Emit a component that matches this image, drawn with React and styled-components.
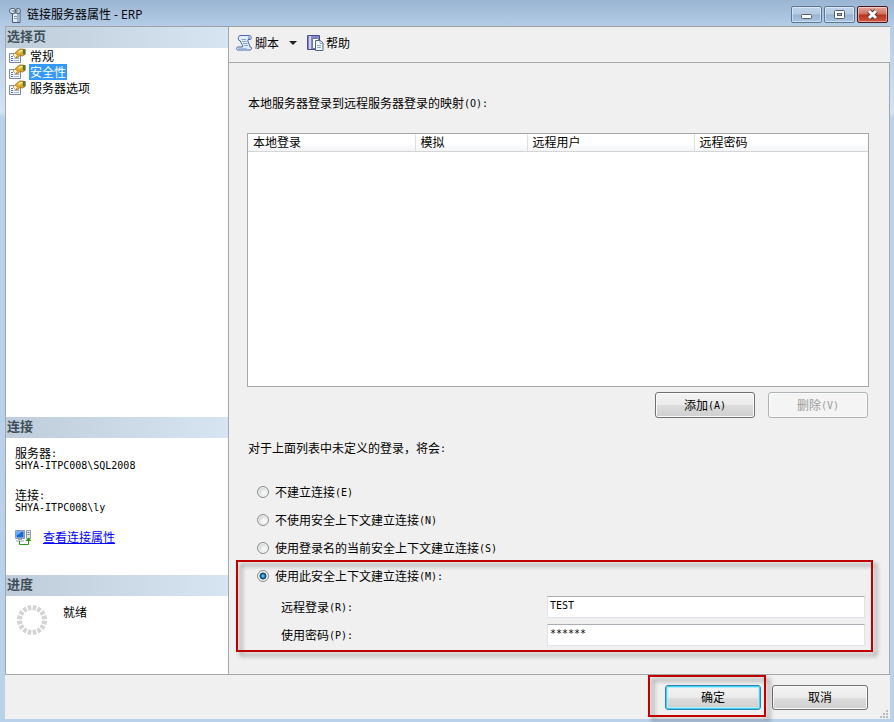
import React, { useState } from 'react';
import styled, { createGlobalStyle, css } from 'styled-components';

const GlobalStyle = createGlobalStyle`
  *, *::before, *::after { box-sizing: border-box; }
  body {
    margin: 0;
    font-family: 'Noto Sans CJK SC', sans-serif;
    font-size: 12px;
    line-height: 16px;
    color: #000;
  }
`;

// Window frame
const Window = styled.div`
  display: flex;
  flex-direction: column;
  min-height: 100vh;
  padding: 0 4px 3px 5px;
  background: linear-gradient(#9ab5d2 0, #b4cce6 26px, #d3e3f4 112px, #b9d1ea 118px);
`;

const TitleBar = styled.header`
  display: flex;
  align-items: center;
  gap: 4px;
  height: 26px;
  padding: 3px 2px 0 2px;
`;

const Title = styled.h1`
  flex: 1;
  margin: 0;
  font-family: 'Open Sans', 'Noto Sans CJK SC', sans-serif;
  font-size: 12px;
  font-weight: 400;
`;

const WindowButtons = styled.div`
  display: flex;
  gap: 2px;
`;

const WindowButton = styled.button`
  display: flex;
  align-items: center;
  justify-content: center;
  width: 31px;
  height: 17px;
  padding: 0;
  border: 1px solid ${(p) => (p.$close ? '#4a1720' : '#5c7896')};
  border-radius: 2px;
  background: ${(p) =>
    p.$close
      ? 'linear-gradient(#e3a79b 0%, #cf6f5e 48%, #b8321b 52%, #d0593f 100%)'
      : 'linear-gradient(#c0d4ea 0%, #b3cae3 48%, #98b4d2 52%, #a9c5e2 100%)'};
  box-shadow: inset 0 0 0 1px rgba(255, 255, 255, 0.45);
`;

const Client = styled.div`
  display: flex;
  flex: 1;
  border-top: 1px solid #a0a0a0;
  background: #f0f0f0;
`;

// Left column
const Sidebar = styled.aside`
  display: flex;
  flex-direction: column;
  width: 224px;
  border: 1px solid #a5a7ab;
  border-width: 0 1px 1px 1px;
  background: #fff;
`;

const SidebarSection = styled.section`
  ${(p) =>
    p.$grow
      ? css`
          flex: 1;
        `
      : css`
          height: ${p.$height}px;
        `}
`;

const SectionTitle = styled.h2`
  margin: 0;
  padding: 1px 1px 4px;
  background: linear-gradient(to right, #bfcddb, #d7e4f2);
  color: #3f4f58;
  font-size: 13px;
  line-height: 16px;
  font-weight: 700;
`;

const PageList = styled.ul`
  margin: 0;
  padding: 0 3px;
  list-style: none;
`;

const PageItem = styled.li`
  display: flex;
  align-items: center;
  gap: 2px;
  height: 16px;
`;

const PageButton = styled.button`
  padding: 0 1px;
  border: 0;
  background: ${(p) => (p.$active ? '#3399ff' : 'transparent')};
  color: ${(p) => (p.$active ? '#fff' : '#000')};
  font: inherit;
`;

const ConnectionBody = styled.div`
  padding: 9px;
`;

const ConnectionInfo = styled.dl`
  margin: 0;
  line-height: 12px;

  dd {
    margin: 0 0 18px;
  }
`;

const LinkRow = styled.div`
  display: flex;
  align-items: center;
  gap: 11px;
  height: 12px;
`;

const Link = styled.a`
  color: #0000ff;
`;

const ProgressBody = styled.div`
  display: flex;
  gap: 15px;
  padding: 8px 10px;
`;

// Right column
const Main = styled.main`
  display: flex;
  flex: 1;
  flex-direction: column;
`;

const Toolbar = styled.div`
  display: flex;
  align-items: center;
  gap: 10px;
  height: 36px;
  padding: 0 7px 3px;
  border-bottom: 1px solid #a5a7ab;
`;

const ToolButton = styled.button`
  display: flex;
  align-items: center;
  gap: 2px;
  padding: 0;
  border: 0;
  background: none;
  color: #000;
  font: inherit;
`;

const Arrow = styled.span`
  border: 4px solid transparent;
  border-top-color: #222;
  border-bottom-width: 0;
`;

const Page = styled.div`
  display: flex;
  flex: 1;
  flex-direction: column;
  padding: 32px 20px 25px 18px;
  border: 1px solid #a5a7ab;
  border-width: 0 1px 1px 0;
`;

const Caption = styled.p`
  margin: 0 1px 22px;
`;

// Half-width characters, 6px each beside the 12px Chinese ones
const Ascii = styled.span`
  font-family: 'DejaVu Sans Mono', monospace;
  font-size: 10px;
  line-height: 0;
  vertical-align: 1px;
`;

const GridBox = styled.div`
  flex: 1;
  min-height: 200px;
  border: 1px solid #a5a7ab;
  background: #fff;
`;

const LoginTable = styled.table`
  width: 100%;
  table-layout: fixed;
  border-collapse: collapse;
`;

const HeadCell = styled.th`
  width: ${(p) => p.$width || 'auto'};
  height: 17px;
  padding: 0 5px;
  border-right: 1px solid #dedfe1;
  border-bottom: 1px solid #d5d5d5;
  background: linear-gradient(#fff 50%, #f3f4f6);
  font-weight: 400;
  line-height: 16px;
  text-align: left;

  &:last-child {
    border-right: 0;
  }
`;

const GridButtons = styled.div`
  display: flex;
  justify-content: flex-end;
  gap: 13px;
  margin: 5px 1px 22px;
`;

const Button = styled.button`
  width: ${(p) => p.$width || 96}px;
  height: ${(p) => p.$height || 25}px;
  padding: 0;
  border: 1px solid #707070;
  border-radius: 3px;
  background: linear-gradient(#f3f3f3 0%, #ebebeb 50%, #dddddd 51%, #cfcfcf 100%);
  box-shadow: inset 0 0 0 1px #fbfbfb;
  color: #000;
  font: inherit;

  ${(p) =>
    p.$primary &&
    css`
      border-color: #2e86b5;
      box-shadow: inset 0 0 0 1px #3fd0f8, inset 0 0 0 2px #b5ecfb;
    `}

  &:disabled {
    border-color: #adb2b5;
    background: #f4f4f4;
    color: #9a9a9a;
  }
`;

const RadioRow = styled.div`
  display: flex;
  align-items: center;
  gap: 6px;
  height: 28px;
  padding-left: 10px;
`;

const Radio = styled.input`
  appearance: none;
  width: 12px;
  height: 12px;
  margin: 0;
  border: 1px solid #8e8f8f;
  border-radius: 50%;
  background: radial-gradient(circle at 60% 60%, #f6f6f6 20%, #c9cdd2 75%);
  box-shadow: inset 0 0 0 1px #f4f4f4;

  &:checked {
    background: radial-gradient(circle, #7fdcff 0, #1b85bd 24%, #0c3a5f 44%, #e3e8ec 54%);
  }
`;

// Red frame drawn over the area it surrounds
const marked = css`
  position: relative;

  &::after {
    content: '';
    position: absolute;
    border: 2px solid #c00000;
    filter: drop-shadow(4px 4px 2px rgba(0, 0, 0, 0.4));
    pointer-events: none;
  }
`;

const MarkedContext = styled.div`
  ${marked}

  &::after {
    inset: -2px -4px -3px -11px;
  }
`;

const Fields = styled.div`
  padding: 3px 4px 0 34px;
`;

const FieldRow = styled.div`
  display: flex;
  align-items: center;
  height: 28px;
`;

const FieldLabel = styled.label`
  width: 266px;
`;

const TextInput = styled.input`
  flex: 1;
  min-width: 0;
  height: 22px;
  padding: 0 2px 4px;
  border: 1px solid #e2e3ea;
  border-top-color: #abadb3;
  background: #fff;
  color: #000;
  font-family: 'DejaVu Sans Mono', monospace;
  font-size: 10px;
`;

const Footer = styled.footer`
  display: flex;
  align-items: center;
  justify-content: flex-end;
  gap: 11px;
  height: 44px;
  padding-right: 1px;
  background: #f0f0f0;
`;

const MarkedButton = styled.div`
  ${marked}

  &::after {
    inset: -10px -5px -7px -17px;
  }
`;

const Grip = styled.svg`
  align-self: flex-end;
`;

const ServerIcon = () => (
  <svg width="16" height="16" viewBox="0 0 16 16" aria-hidden="true">
    <path d="M5.500 6h7.500v9.500H5.500z" fill="#e4ebf4" stroke="#455a76" />
    <path d="M10 6.500h2.500v8.500H10z" fill="#9fb2cc" />
    <path d="M7 9.500h3M7 11.500h3" stroke="#8496ad" />
    <rect x="2.500" y="1.500" width="6" height="5" rx="2.500" fill="#f6f9fc" stroke="#455a76" />
    <rect x="8.500" y="1.500" width="5" height="5" rx="2.500" fill="#dbe5f0" stroke="#455a76" />
    <path d="M4.500 4h7" stroke="#455a76" />
  </svg>
);

const PropertiesIcon = () => (
  <svg width="18" height="16" viewBox="0 0 18 16" aria-hidden="true">
    <path d="M.5 5.500h11v9H.5z" fill="#f4f7fd" stroke="#7787ac" />
    <path d="M2 8.500h2M2 10.500h2M2 12.500h2" stroke="#5377c5" />
    <path d="M5 10.500h5M5 12.500h5" stroke="#a7b6d6" />
    <path d="M4.500 6.500L8 3l2.500-2h4L16 2.500v4L13.500 8 11 7.500 8.500 10 6 9z" fill="#e0a526" stroke="#8b6a20" strokeWidth=".7" />
    <path d="M8.500 4l3-2h2.500L11 5z" fill="#ffe58a" />
    <path d="M14 1h2.500v5.500H14z" fill="#56783c" />
    <path d="M4 7l2-2 2.500 2.500-2 2z" fill="#fff3c2" stroke="#927b45" strokeWidth=".5" />
  </svg>
);

const ScriptIcon = () => (
  <svg width="17" height="16" viewBox="0 0 17 16" aria-hidden="true">
    <path
      d="M4 .5h9.500c2 0 2.500 4 .5 4h-2c-1 2 2 5 2 7.500h1c1 1 .5 3-1 3H2c-2 0-2-3 0-3h4.500c1-2-2-4-2.500-6.500h-1C2 4 2 1 4 .500z"
      fill="#e3edfb"
      stroke="#4c679f"
    />
    <path d="M5.500 4.500H10M6 6.500h4.500M7 8.500h4.500M8 10.500h4" stroke="#86a5df" />
    <path d="M2 13h9v1.500H2z" fill="#9db7e6" />
    <path d="M12 1.500h2V4h-2z" fill="#8ea9dc" />
  </svg>
);

const HelpIcon = () => (
  <svg width="17" height="16" viewBox="0 0 17 16" aria-hidden="true">
    <path d="M.5.500h12v14H.5z" fill="#8587c9" stroke="#4b4d91" />
    <path d="M3 1v13" stroke="#cfd0f2" strokeWidth="2" />
    <path d="M5.500 3.500h5l2 2v8h-7z" fill="#fff" stroke="#697ba0" />
    <path d="M8.500 5.500h5l2.500 2.500v7.500H8.500z" fill="#f5f8fd" stroke="#50658e" />
    <path d="M13 5.500V8.500h3M10 10.500h4M10 12.500h4" fill="none" stroke="#91a4c8" />
  </svg>
);

const ConnectionIcon = () => (
  <svg width="17" height="17" viewBox="0 0 17 17" aria-hidden="true">
    <path d="M.5 1.500h9v8h-9z" fill="#c3d0e0" stroke="#8d9caf" />
    <path d="M1.500 2.500h7v6h-7z" fill="#1769d8" />
    <path d="M1.500 2.500h6l-6 4z" fill="#69b2ff" />
    <path d="M3 10.500h4M1 12h8" stroke="#9ba9ba" />
    <path d="M11.500 1.500h4v8h-4z" fill="#e6ebf1" stroke="#8d9caf" />
    <path d="M12.500 3.500h2M12.500 5.500h2" stroke="#66798f" />
    <path d="M4.500 12v3.500h9V11" fill="none" stroke="#2d9815" />
    <path d="M10.500 12l3-3.500 3 3.500z" fill="#2d9815" />
  </svg>
);

const Spinner = () => (
  <svg width="32" height="32" viewBox="0 0 32 32" aria-hidden="true">
    {Array.from({ length: 16 }, (_, i) => (
      <path key={i} d="M14.500 6L14 1h4l-.5 5z" fill="#d4d4d4" transform={`rotate(${(i + 0.5) * 22.5} 16 16)`} />
    ))}
  </svg>
);

const MinimizeIcon = () => (
  <svg width="13" height="11" viewBox="0 0 13 11" aria-hidden="true">
    <rect x="1.500" y="5.500" width="10" height="4" rx="1" fill="#fff" stroke="#535c68" />
  </svg>
);

const MaximizeIcon = () => (
  <svg width="13" height="11" viewBox="0 0 13 11" aria-hidden="true">
    <rect x="1.500" y="1.500" width="10" height="8" rx="1" fill="#fff" stroke="#535c68" />
    <rect x="4.500" y="4.500" width="4" height="2" fill="#9db8d6" stroke="#535c68" />
  </svg>
);

const CloseIcon = () => (
  <svg width="13" height="11" viewBox="0 0 13 11" aria-hidden="true">
    <path d="M3 2l7 7M10 2l-7 7" stroke="#54343a" strokeWidth="5" />
    <path d="M3 2l7 7M10 2l-7 7" stroke="#fff" strokeWidth="3" />
  </svg>
);

const pages = ['常规', '安全性', '服务器选项'];

const columns = [
  { name: '本地登录', width: '167px' },
  { name: '模拟', width: '112px' },
  { name: '远程用户', width: '167px' },
  { name: '远程密码' },
];

const options = [
  { id: 'none', label: '不建立连接', hint: '(E)' },
  { id: 'noContext', label: '不使用安全上下文建立连接', hint: '(N)' },
  { id: 'current', label: '使用登录名的当前安全上下文建立连接', hint: '(S)' },
];

const App = () => {
  const [page, setPage] = useState('安全性');
  const [mode, setMode] = useState('context');
  const [user, setUser] = useState('TEST');
  const [password, setPassword] = useState('******');

  const renderOption = ({ id, label, hint }) => (
    <RadioRow key={id}>
      <Radio type="radio" name="mode" id={id} checked={mode === id} onChange={() => setMode(id)} />
      <label htmlFor={id}>
        {label}
        <Ascii>{hint}</Ascii>
      </label>
    </RadioRow>
  );

  return (
    <>
      <GlobalStyle />
      <Window>
        <TitleBar>
          <ServerIcon />
          <Title>链接服务器属性 - ERP</Title>
          <WindowButtons>
            <WindowButton aria-label="最小化"><MinimizeIcon /></WindowButton>
            <WindowButton aria-label="最大化"><MaximizeIcon /></WindowButton>
            <WindowButton $close aria-label="关闭"><CloseIcon /></WindowButton>
          </WindowButtons>
        </TitleBar>

        <Client>
          <Sidebar>
            <SidebarSection $grow>
              <SectionTitle>选择页</SectionTitle>
              <PageList>
                {pages.map((name) => (
                  <PageItem key={name}>
                    <PropertiesIcon />
                    <PageButton $active={page === name} onClick={() => setPage(name)}>{name}</PageButton>
                  </PageItem>
                ))}
              </PageList>
            </SidebarSection>

            <SidebarSection $height={158}>
              <SectionTitle>连接</SectionTitle>
              <ConnectionBody>
                <ConnectionInfo>
                  <dt>服务器<Ascii>:</Ascii></dt>
                  <dd><Ascii>SHYA-ITPC008\SQL2008</Ascii></dd>
                  <dt>连接<Ascii>:</Ascii></dt>
                  <dd><Ascii>SHYA-ITPC008\ly</Ascii></dd>
                </ConnectionInfo>
                <LinkRow>
                  <ConnectionIcon />
                  <Link href="#connection">查看连接属性</Link>
                </LinkRow>
              </ConnectionBody>
            </SidebarSection>

            <SidebarSection $height={99}>
              <SectionTitle>进度</SectionTitle>
              <ProgressBody>
                <Spinner />
                <span>就绪</span>
              </ProgressBody>
            </SidebarSection>
          </Sidebar>

          <Main>
            <Toolbar>
              <ToolButton><ScriptIcon />脚本</ToolButton>
              <ToolButton aria-label="脚本选项"><Arrow /></ToolButton>
              <ToolButton><HelpIcon />帮助</ToolButton>
            </Toolbar>

            <Page>
              <Caption>本地服务器登录到远程服务器登录的映射<Ascii>(O):</Ascii></Caption>
              <GridBox>
                <LoginTable>
                  <thead>
                    <tr>
                      {columns.map((col) => (
                        <HeadCell key={col.name} $width={col.width}>{col.name}</HeadCell>
                      ))}
                    </tr>
                  </thead>
                </LoginTable>
              </GridBox>
              <GridButtons>
                <Button $width={100} $height={26}>添加<Ascii>(A)</Ascii></Button>
                <Button $width={100} $height={26} disabled>删除<Ascii>(V)</Ascii></Button>
              </GridButtons>

              <Caption>对于上面列表中未定义的登录，将会<Ascii>:</Ascii></Caption>
              {options.map(renderOption)}
              <MarkedContext>
                {renderOption({ id: 'context', label: '使用此安全上下文建立连接', hint: '(M):' })}
                <Fields>
                  <FieldRow>
                    <FieldLabel htmlFor="user">远程登录<Ascii>(R):</Ascii></FieldLabel>
                    <TextInput id="user" value={user} onChange={(e) => setUser(e.target.value)} />
                  </FieldRow>
                  <FieldRow>
                    <FieldLabel htmlFor="password">使用密码<Ascii>(P):</Ascii></FieldLabel>
                    <TextInput id="password" value={password} onChange={(e) => setPassword(e.target.value)} />
                  </FieldRow>
                </Fields>
              </MarkedContext>
            </Page>
          </Main>
        </Client>

        <Footer>
          <MarkedButton>
            <Button $primary>确定</Button>
          </MarkedButton>
          <Button>取消</Button>
          <Grip width="10" height="10" viewBox="0 0 10 10" aria-hidden="true">
            <path d="M7 1h2v2H7zM4 4h2v2H4zM7 4h2v2H7zM1 7h2v2H1zM4 7h2v2H4zM7 7h2v2H7z" fill="#bcbcbc" />
          </Grip>
        </Footer>
      </Window>
    </>
  );
};

export default App;
